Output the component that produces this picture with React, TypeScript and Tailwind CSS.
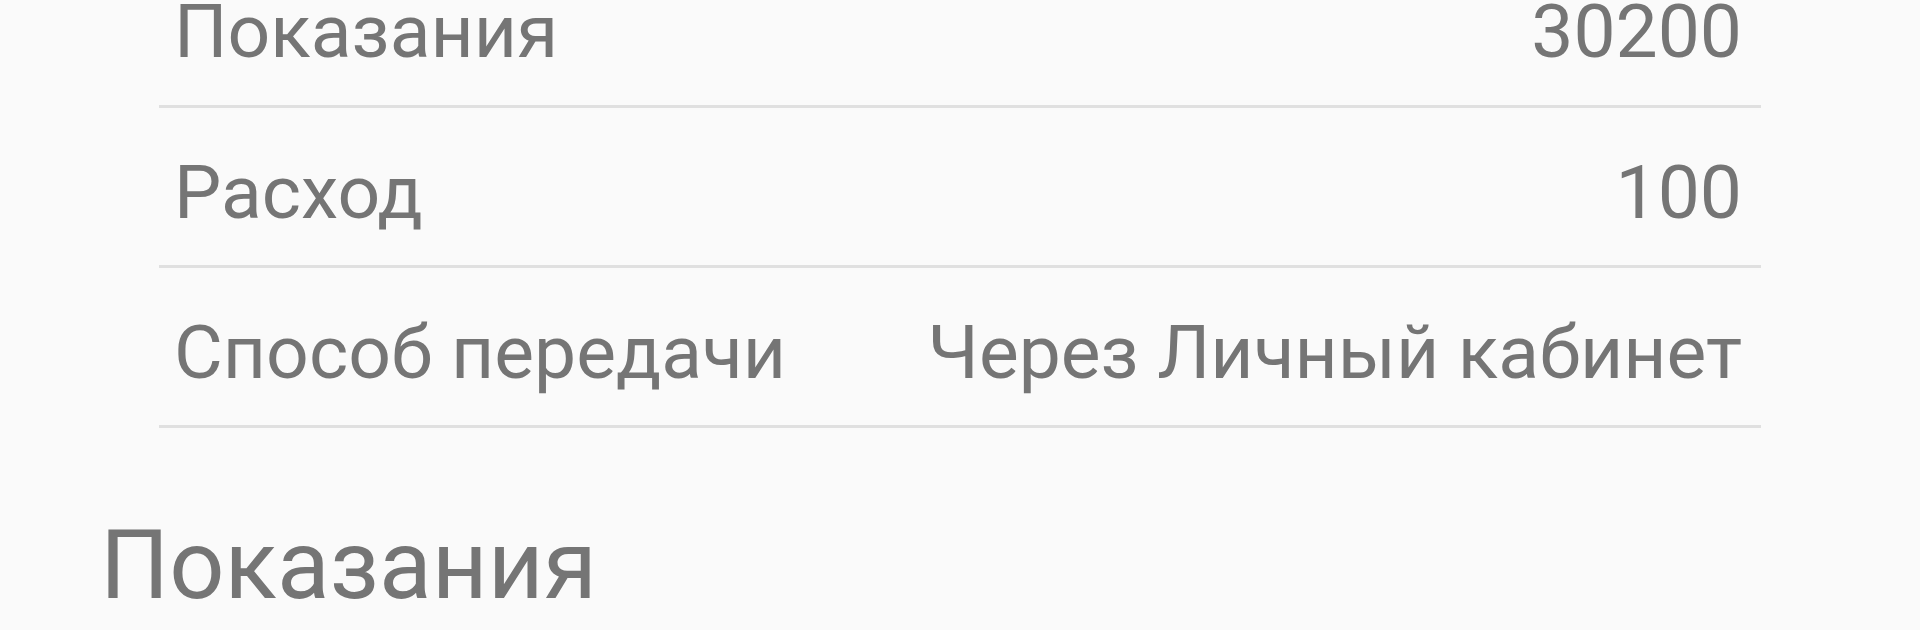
const rows = [
  { label: 'Показания', value: '30200' },
  { label: 'Расход', value: '100' },
  { label: 'Способ передачи', value: 'Через Личный кабинет' },
];

export default function App() {
  return (
    <div className="h-[630px] w-full overflow-hidden bg-[#fafafa] font-['Roboto',sans-serif] text-[#757575]">
      <div className="mx-[159px]">
        {rows.map((row, i) => (
          <div
            key={row.label}
            className={
              i === 0
                ? 'flex items-start justify-between border-b-[3px] border-[#e0e0e0] pl-[15px] pr-[19px] pb-[43px] text-[75px] leading-[62px]'
                : 'flex items-start justify-between border-b-[3px] border-[#e0e0e0] pl-[15px] pr-[19px] pt-[40px] pb-[29px] text-[75px] leading-[88px]'
            }
          >
            <span>{row.label}</span>
            <span>{row.value}</span>
          </div>
        ))}
      </div>
      <h2 className="mt-[80px] px-[100px] text-[97px] leading-[114px] font-normal">Показания</h2>
    </div>
  );
}
